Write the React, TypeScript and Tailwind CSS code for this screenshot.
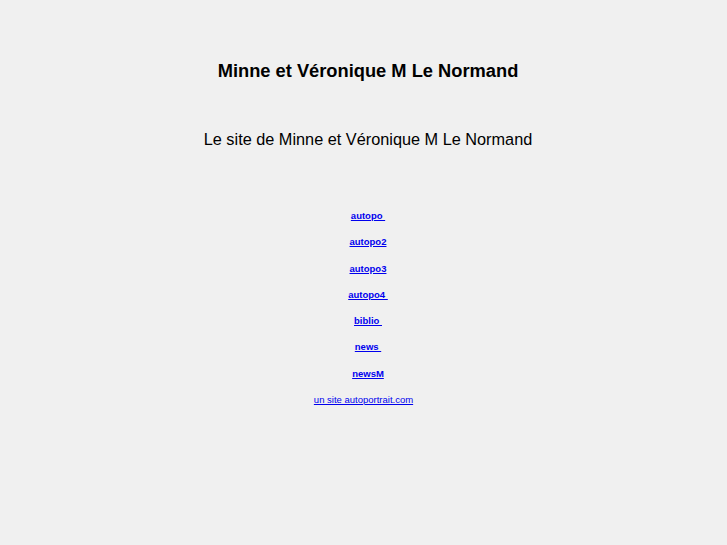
const links = [
    {label: "autopo ", bold: true},
    {label: "autopo2", bold: true},
    {label: "autopo3", bold: true},
    {label: "autopo4 ", bold: true},
    {label: "biblio ", bold: true},
    {label: "news ", bold: true},
    {label: "newsM", bold: true},
    {label: "un site autoportrait.com", bold: false},
];

export default function App() {
    return (
        <div className="min-h-[545px] bg-[#f0f0f0] text-black pl-[9px] pt-[60px]" style={{fontFamily: '"Liberation Sans", Arial, sans-serif'}}>
            <h1 className="text-center text-[18.3px] font-bold leading-[22px]">Minne et Véronique M Le Normand</h1>
            <p className="text-center text-[16.3px] leading-[20px] mt-[47px]">Le site de Minne et Véronique M Le Normand</p>
            <div className="flex flex-col items-center mt-[61px] gap-[14.3px]">
                {links.map((l, i) => (
                    <a key={i} href="#" className={`text-[9.5px] leading-[12px] text-[#0000ee] underline whitespace-pre ${l.bold ? "font-bold" : "mr-[9px]"}`}>{l.label}</a>
                ))}
            </div>
        </div>
    )
}
